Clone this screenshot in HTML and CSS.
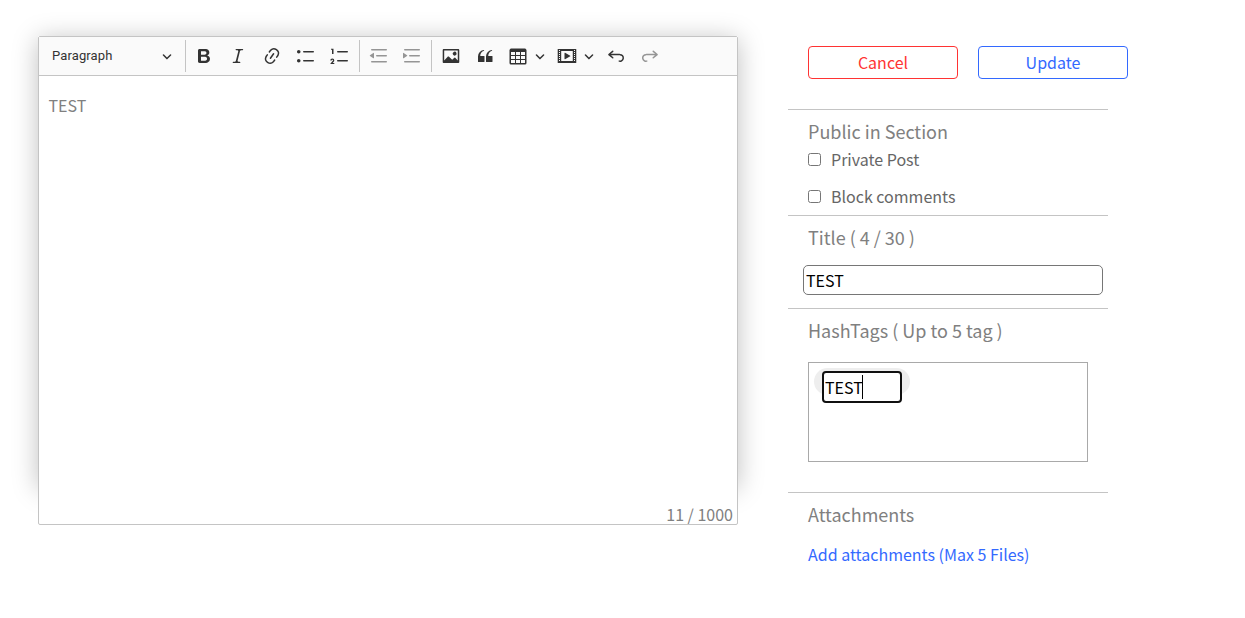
FILE: index.html
```html
<!DOCTYPE html>
<html lang="en">
<head>
<meta charset="utf-8">
<title>Edit post</title>
<link rel="stylesheet" href="styles.css">
</head>
<body>
<main class="page">
  <section class="editor-area">
    <div class="editor">
      <div class="toolbar">
        <div class="heading-select"><span>Paragraph</span><svg class="arrow" viewBox="0 0 10 10"><path id="arrow" d="M.941 4.523a.75.75 0 1 1 1.06-1.06l3.006 3.005 3.005-3.005a.75.75 0 1 1 1.06 1.06l-3.549 3.55a.75.75 0 0 1-1.168-.136L.941 4.523z"/></svg></div>
        <div class="group">
          <span class="tool"><svg class="icon" viewBox="0 0 20 20"><path d="M10.187 17H5.773c-.637 0-1.092-.138-1.364-.415-.273-.277-.409-.718-.409-1.323V4.738c0-.617.14-1.062.419-1.332.279-.27.73-.406 1.354-.406h4.68c.69 0 1.288.041 1.793.124.506.083.96.242 1.36.478.341.197.644.447.906.75a3.262 3.262 0 0 1 .808 2.162c0 1.401-.722 2.426-2.167 3.075C15.05 10.175 16 11.315 16 13.01a3.756 3.756 0 0 1-2.296 3.504 6.1 6.1 0 0 1-1.517.377c-.571.073-1.238.11-2 .11zm-.217-6.217H7v4.087h3.069c1.977 0 2.965-.69 2.965-2.072 0-.707-.256-1.22-.768-1.537-.512-.319-1.277-.478-2.296-.478zM7 5.13v3.619h2.606c.729 0 1.292-.067 1.69-.2a1.6 1.6 0 0 0 .91-.765c.165-.267.247-.566.247-.897 0-.707-.26-1.176-.778-1.409-.519-.232-1.31-.348-2.375-.348H7z"/></svg></span>
          <span class="tool"><svg class="icon" viewBox="0 0 20 20"><path d="m9.586 14.633.021.004c-.036.335.095.655.393.962.082.083.173.15.274.201h1.474a.6.6 0 1 1 0 1.2H5.304a.6.6 0 0 1 0-1.2h1.15c.474-.07.809-.182 1.005-.334.157-.122.291-.32.404-.597l2.416-9.55a1.053 1.053 0 0 0-.281-.823 1.12 1.12 0 0 0-.442-.296H8.15a.6.6 0 0 1 0-1.2h6.443a.6.6 0 1 1 0 1.2h-1.195c-.376.056-.65.155-.823.296-.215.175-.423.439-.623.79l-2.366 9.347z"/></svg></span>
          <span class="tool"><svg class="icon" viewBox="0 0 20 20"><path d="m11.077 15 .991-1.416a.75.75 0 1 1 1.229.86l-1.148 1.64a.748.748 0 0 1-.217.206 5.251 5.251 0 0 1-8.503-5.955.741.741 0 0 1 .12-.274l1.147-1.639a.75.75 0 1 1 1.228.86L4.933 10.7l.006.003a3.75 3.75 0 0 0 6.132 4.294l.006.004zm5.494-5.335a.748.748 0 0 1-.12.274l-1.147 1.639a.75.75 0 1 1-1.228-.86l.86-1.23a3.75 3.75 0 0 0-6.144-4.301l-.86 1.229a.75.75 0 0 1-1.229-.86l1.148-1.64a.748.748 0 0 1 .217-.206 5.251 5.251 0 0 1 8.503 5.955zm-4.563-2.532a.75.75 0 0 1 .184 1.045l-3.155 4.505a.75.75 0 1 1-1.229-.86l3.155-4.506a.75.75 0 0 1 1.045-.184z"/></svg></span>
          <span class="tool"><svg class="icon" viewBox="0 0 20 20"><path d="M7 5.75c0 .414.336.75.75.75h9.5a.75.75 0 1 0 0-1.5h-9.5a.75.75 0 0 0-.75.75zm-6 0C1 4.784 1.777 4 2.75 4c.966 0 1.75.777 1.75 1.75 0 .966-.777 1.75-1.75 1.75C1.784 7.5 1 6.723 1 5.75zm6 9c0 .414.336.75.75.75h9.5a.75.75 0 1 0 0-1.5h-9.5a.75.75 0 0 0-.75.75zm-6 0c0-.966.777-1.75 1.75-1.75.966 0 1.75.777 1.75 1.75 0 .966-.777 1.75-1.75 1.75-.966 0-1.75-.777-1.75-1.75z"/></svg></span>
          <span class="tool"><svg class="icon" viewBox="0 0 20 20"><path d="M7 5.75c0 .414.336.75.75.75h9.5a.75.75 0 1 0 0-1.5h-9.5a.75.75 0 0 0-.75.75zM3.5 3v5H2V3.7H1v-1h2.5V3zM.343 17.857l2.59-3.257H2.92a.6.6 0 1 0-1.04 0H.302a2 2 0 1 1 3.995 0h-.001c-.048.405-.16.734-.333.988-.175.254-.59.692-1.244 1.312H4.3v1h-4l.043-.043zM7 14.75a.75.75 0 0 1 .75-.75h9.5a.75.75 0 1 1 0 1.5h-9.5a.75.75 0 0 1-.75-.75z"/></svg></span>
        </div>
        <div class="group group-indent">
          <span class="tool disabled"><svg class="icon" viewBox="0 0 20 20"><path d="M2 3.75c0 .414.336.75.75.75h14.5a.75.75 0 1 0 0-1.5H2.75a.75.75 0 0 0-.75.75zm5 6c0 .414.336.75.75.75h9.5a.75.75 0 1 0 0-1.5h-9.5a.75.75 0 0 0-.75.75zM2.75 16.5h14.5a.75.75 0 1 0 0-1.5H2.75a.75.75 0 1 0 0 1.5zm1.618-9.55L.98 9.358a.4.4 0 0 0 .013.661l3.39 2.207A.4.4 0 0 0 5 11.892V7.275a.4.4 0 0 0-.632-.326z"/></svg></span>
          <span class="tool disabled"><svg class="icon" viewBox="0 0 20 20"><path d="M2 3.75c0 .414.336.75.75.75h14.5a.75.75 0 1 0 0-1.5H2.75a.75.75 0 0 0-.75.75zm5 6c0 .414.336.75.75.75h9.5a.75.75 0 1 0 0-1.5h-9.5a.75.75 0 0 0-.75.75zM2.75 16.5h14.5a.75.75 0 1 0 0-1.5H2.75a.75.75 0 1 0 0 1.5zM1.632 6.95 5.02 9.358a.4.4 0 0 1-.013.661l-3.39 2.207A.4.4 0 0 1 1 11.892V7.275a.4.4 0 0 1 .632-.326z"/></svg></span>
        </div>
        <div class="group group-insert">
          <span class="tool"><svg class="icon" viewBox="0 0 20 20"><path d="M6.91 10.54c.26-.23.64-.21.88.03l3.36 3.14 2.23-2.06a.64.64 0 0 1 .87 0l2.52 2.97V4.5H3.2v10.12l3.71-4.08zm10.27-7.51c.6 0 1.09.47 1.09 1.05v11.84c0 .59-.49 1.06-1.09 1.06H2.79c-.6 0-1.09-.47-1.09-1.06V4.08c0-.58.49-1.05 1.1-1.05h14.38zm-5.22 5.56a1.96 1.96 0 1 1 3.4-1.96 1.96 1.96 0 0 1-3.4 1.96z"/></svg></span>
          <span class="tool"><svg class="icon" viewBox="0 0 20 20"><path d="M3 10.423a6.5 6.5 0 0 1 6.056-6.408l.038.67C6.448 5.423 5.354 7.663 5.22 10H9c.552 0 .5.432.5.986v4.511c0 .554-.448.503-1 .503h-5c-.552 0-.5-.449-.5-1.003v-4.574zm8 0a6.5 6.5 0 0 1 6.056-6.408l.038.67c-2.646.739-3.74 2.979-3.873 5.315H17c.552 0 .5.432.5.986v4.511c0 .554-.448.503-1 .503h-5c-.552 0-.5-.449-.5-1.003v-4.574z"/></svg></span>
          <span class="tool split"><svg class="icon" viewBox="0 0 20 20"><path d="M3 6v3h4V6H3zm0 4v3h4v-3H3zm0 4v3h4v-3H3zm5 3h4v-3H8v3zm5 0h4v-3h-4v3zm4-4v-3h-4v3h4zm0-4V6h-4v3h4zm1.5 8a1.5 1.5 0 0 1-1.5 1.5H3A1.5 1.5 0 0 1 1.5 17V4c.222-.863 1.068-1.5 2-1.5h13c.932 0 1.778.637 2 1.5v13zM12 13v-3H8v3h4zm0-4V6H8v3h4z"/></svg><svg class="arrow" viewBox="0 0 10 10"><use href="#arrow"/></svg></span>
          <span class="tool split"><svg class="icon" viewBox="0 0 20 20"><path d="M18.68 3.03c.6 0 .59-.03.59.55v12.84c0 .59.01.56-.59.56H1.29c-.6 0-.59.03-.59-.56V3.58c0-.58-.01-.55.6-.55h17.38zM15.77 15V5H4.2v10h11.57zM2 4v1h1V4H2zm0 2v1h1V6H2zm0 2v1h1V8H2zm0 2v1h1v-1H2zm0 2v1h1v-1H2zm0 2v1h1v-1H2zM17 4v1h1V4h-1zm0 2v1h1V6h-1zm0 2v1h1V8h-1zm0 2v1h1v-1h-1zm0 2v1h1v-1h-1zm0 2v1h1v-1h-1zM7.5 7.177a.4.4 0 0 1 .593-.351l5.133 2.824a.4.4 0 0 1 0 .7l-5.133 2.824a.4.4 0 0 1-.593-.35V7.176v.001z"/></svg><svg class="arrow" viewBox="0 0 10 10"><use href="#arrow"/></svg></span>
          <span class="tool"><svg class="icon" viewBox="0 0 20 20"><path id="undo" d="m5.042 9.367 2.189 1.837a.75.75 0 0 1-.965 1.149l-3.788-3.18a.747.747 0 0 1-.21-.284.75.75 0 0 1 .17-.945L6.23 4.762a.75.75 0 1 1 .964 1.15L4.863 7.866h8.917A.75.75 0 0 1 14 7.9a4 4 0 1 1-1.477 7.718l.344-1.489a2.5 2.5 0 1 0 1.094-4.73l.008-.032H5.042z"/></svg></span>
          <span class="tool disabled"><svg class="icon flip" viewBox="0 0 20 20"><use href="#undo"/></svg></span>
        </div>
      </div>
      <div class="content">
        <p class="text">TEST</p>
        <p class="count">11 / 1000</p>
      </div>
    </div>
  </section>
  <aside class="side">
    <div class="actions">
      <button class="btn btn-cancel">Cancel</button>
      <button class="btn btn-update">Update</button>
    </div>
    <section class="panel panel-public">
      <h2 class="label">Public in Section</h2>
      <label class="check"><span class="box"></span>Private Post</label>
      <label class="check"><span class="box"></span>Block comments</label>
    </section>
    <section class="panel panel-title">
      <h2 class="label">Title ( 4 / 30 )</h2>
      <div class="title-input">TEST</div>
    </section>
    <section class="panel panel-tags">
      <h2 class="label">HashTags ( Up to 5 tag )</h2>
      <div class="tags"><div class="chip"><div class="tag-input">TEST<span class="caret"></span></div></div></div>
    </section>
    <section class="panel">
      <h2 class="label">Attachments</h2>
      <a class="add">Add attachments (Max 5 Files)</a>
    </section>
  </aside>
</main>
</body>
</html>
```
FILE: styles.css
```css
* { box-sizing: border-box; }
body {
  margin: 0;
  background: #fff;
  color: #808080;
  font-family: "Noto Sans CJK KR", sans-serif;
  font-size: 16px;
  line-height: 24px;
}
p, h2 { margin: 0; font-weight: 400; }
.page { display: flex; gap: 50px; height: 618px; padding: 36px 0 0 38px; overflow: hidden; }

.editor-area { width: 700px; height: 450px; box-shadow: 0 3px 24px rgba(0, 0, 0, .25); }
.editor {
  display: flex;
  flex-direction: column;
  height: 489px;
  border: 1px solid #c4c4c4;
  border-radius: 2px;
  background: #fff;
}
.toolbar {
  display: flex;
  height: 39px;
  align-items: center;
  border-bottom: 1px solid #c4c4c4;
  background: #fafafa;
}
.heading-select {
  display: flex;
  width: 146px;
  align-items: center;
  justify-content: space-between;
  padding: 0 13px;
  color: #333;
  font: 13px/20px Roboto, sans-serif;
  letter-spacing: .12px;
}
.heading-select span { margin-top: -1px; }
.group { display: flex; height: 32px; width: 174px; padding-left: 1.6px; border-left: 1px solid #c4c4c4; }
.group-indent { width: 72px; padding-left: 1.7px; }
.group-insert { width: auto; padding-left: 2.1px; }
.tool { display: flex; width: 33.8px; flex: none; align-items: center; justify-content: center; }
.split { width: 48.7px; gap: 7px; justify-content: flex-start; padding-left: 6.4px; }
.icon { display: block; width: 20px; height: 20px; flex: none; fill: #333; }
.arrow { display: block; width: 10px; height: 10px; flex: none; fill: #333; }
.disabled { opacity: .5; }
.flip { transform: scaleX(-1); }
.content { display: flex; flex: 1; flex-direction: column; justify-content: space-between; padding: 17px 4px 0 9.5px; }
.count { align-self: flex-end; line-height: 20px; }

.side { width: 340px; }
.actions { display: flex; gap: 20px; padding: 10px 0 30px 20px; }
.btn {
  width: 150px;
  height: 33px;
  padding: 0 0 2px;
  border: 1px solid;
  border-radius: 4px;
  background: #fff;
  font: inherit;
}
.btn-cancel { border-color: #ff3333; color: #ff3333; }
.btn-update { border-color: #3369ff; color: #3369ff; }
.panel { width: 320px; padding: 7px 20px 0; border-top: 1px solid #c4c4c4; }
.panel-public { height: 106px; }
.panel-title { height: 93px; }
.panel-tags { height: 184px; }
.label { font-size: 18px; line-height: 28px; }
.panel-public .label { margin-bottom: 2px; }
.check { display: flex; gap: 10px; align-items: center; height: 24px; margin-bottom: 13px; color: #666; }
.box { width: 13px; height: 13px; border: 1px solid #767676; border-radius: 2.5px; background: #fff; }
.title-input {
  width: 300px;
  height: 30px;
  margin: 14px 0 0 -5px;
  padding: 2px;
  border: 1px solid #767676;
  border-radius: 5px;
  color: #000;
}
.tags { width: 280px; height: 100px; margin-top: 18px; padding: 5px; border: 1px solid #a9a9a9; }
.chip { width: 96px; height: 27px; padding: 3px 8px 0; border-radius: 14px; background: #eee; }
.tag-input {
  display: flex;
  width: 80px;
  height: 32px;
  align-items: center;
  padding: 0 1px;
  border: 2px solid #101010;
  border-radius: 4px;
  background: #fff;
  color: #000;
}
.caret { width: 1px; height: 24px; margin-left: -1px; background: #000; }
.add { display: block; margin-top: 14px; color: #3369ff; }
```
